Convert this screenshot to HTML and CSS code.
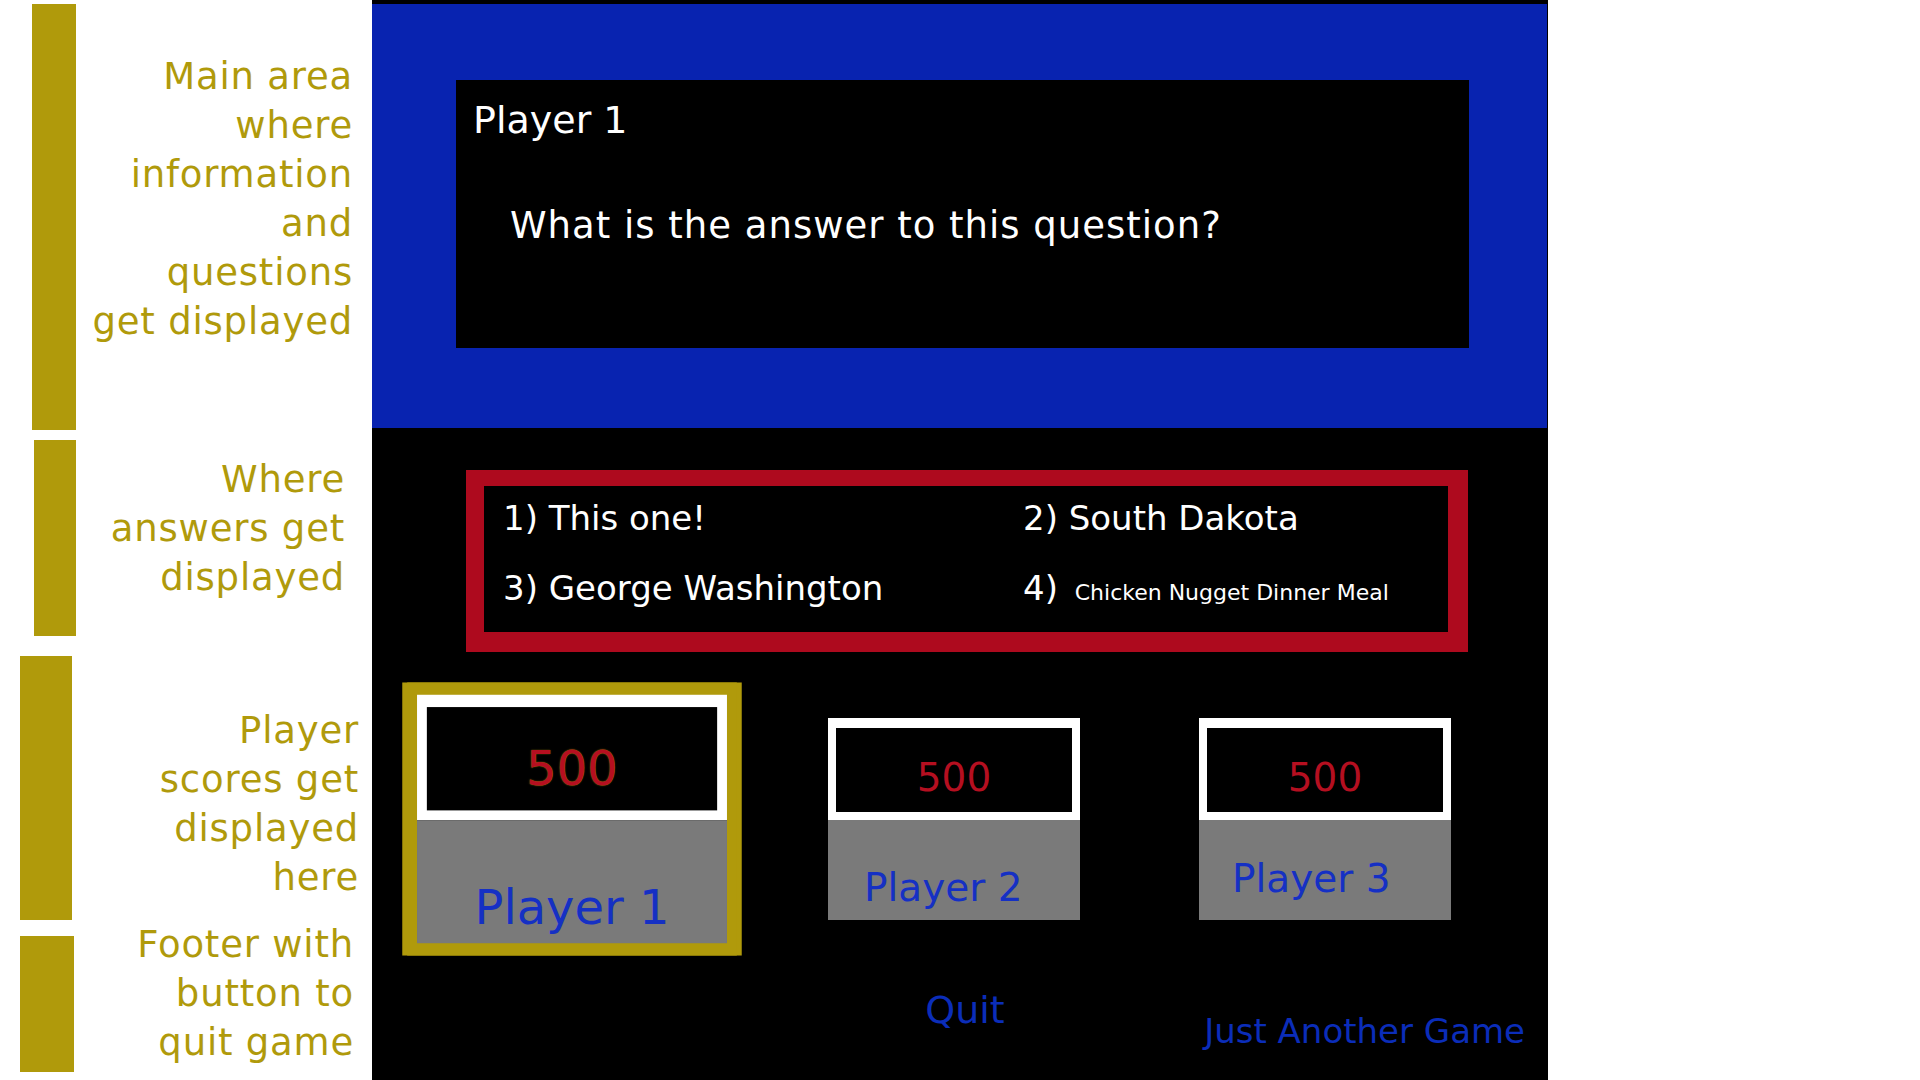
FILE: index.html
```html
<!DOCTYPE html>
<html lang="en">
<head>
<meta charset="utf-8">
<title>Just Another Game</title>
<link rel="stylesheet" href="styles.css">
</head>
<body>
<div class="page">
  <aside class="side">
    <div class="bars">
      <div class="bar bar--main"></div>
      <div class="bar bar--answers"></div>
      <div class="bar bar--scores"></div>
      <div class="bar bar--footer"></div>
    </div>
    <div class="labels">
      <p class="label label--main">Main area<br>where<br>information<br>and<br>questions<br>get displayed</p>
      <p class="label label--answers">Where<br>answers get<br>displayed</p>
      <p class="label label--scores">Player<br>scores get<br>displayed<br>here</p>
      <p class="label label--footer">Footer with<br>button to<br>quit game</p>
    </div>
  </aside>
  <main class="game">
    <section class="board">
      <div class="prompt">
        <div class="prompt-player">Player 1</div>
        <div class="prompt-question">What is the answer to this question?</div>
      </div>
    </section>
    <section class="answers">
      <div class="answers-grid">
        <div class="answer">1) This one!</div>
        <div class="answer">2) South Dakota</div>
        <div class="answer">3) George Washington</div>
        <div class="answer">4) <span class="answer-small">Chicken Nugget Dinner Meal</span></div>
      </div>
    </section>
    <section class="players">
      <div class="card card--active card--p1">
        <div class="card-score"><div class="card-score-value">500</div></div>
        <div class="card-name">Player 1</div>
      </div>
      <div class="card card--p2">
        <div class="card-score"><div class="card-score-value">500</div></div>
        <div class="card-name">Player 2</div>
      </div>
      <div class="card card--p3">
        <div class="card-score"><div class="card-score-value">500</div></div>
        <div class="card-name">Player 3</div>
      </div>
    </section>
    <footer class="footer">
      <span class="footer-spacer"></span>
      <button class="quit" type="button">Quit</button>
      <span class="footer-title">Just Another Game</span>
    </footer>
  </main>
</div>
</body>
</html>
```

FILE: styles.css
```css
html, body {
  margin: 0;
  padding: 0;
  background: #ffffff;
  font-family: "DejaVu Sans", Verdana, sans-serif;
}

.page {
  display: flex;
  height: 1080px;
  overflow: hidden;
}

/* ---------- annotation column ---------- */
.side {
  flex: none;
  width: 372px;
  display: flex;
  background: #ffffff;
}

.bars {
  flex: none;
  width: 80px;
  display: flex;
  flex-direction: column;
}

.bar {
  flex: none;
  background: #b09a0b;
}

.bar--main    { margin-top: 4px;  height: 426px; margin-left: 32px; width: 44px; }
.bar--answers { margin-top: 10px; height: 196px; margin-left: 34px; width: 42px; }
.bar--scores  { margin-top: 20px; height: 264px; margin-left: 20px; width: 52px; }
.bar--footer  { margin-top: 16px; height: 136px; margin-left: 20px; width: 54px; }

.labels {
  flex: 1;
  display: flex;
  flex-direction: column;
}

.label {
  margin: 0;
  color: #b09a0b;
  font-size: 37px;
  line-height: 49px;
  letter-spacing: 0.8px;
  text-align: right;
  white-space: nowrap;
}

.label--main    { margin-top: 52px;  padding-right: 19px; }
.label--answers { margin-top: 109px; padding-right: 27px; }
.label--scores  { margin-top: 104px; padding-right: 13px; }
.label--footer  { margin-top: 18px;  padding-right: 18px; }

/* ---------- game column ---------- */
.game {
  flex: none;
  width: 1176px;
  background: #000000;
  padding-top: 4px;
  display: flex;
  flex-direction: column;
}

.board {
  background: #0823b0;
  margin-right: 1px;
  padding: 76px 78px 80px 84px;
}

.prompt {
  height: 268px;
  box-sizing: border-box;
  background: #000000;
  color: #ffffff;
  padding: 18px 0 0 17px;
}

.prompt-player {
  font-size: 38px;
  line-height: 44px;
}

.prompt-question {
  margin-top: 62px;
  padding-left: 37px;
  font-size: 37px;
  line-height: 44px;
  letter-spacing: 1px;
}

.answers {
  margin: 42px 80px 0 94px;
  border-style: solid;
  border-color: #ae0a1e;
  border-width: 16px 20px 20px 18px;
  background: #000000;
  height: 146px;
}

.answers-grid {
  display: grid;
  grid-template-columns: 520px 1fr;
  row-gap: 30px;
  padding: 12px 0 0 19px;
}

.answer {
  color: #ffffff;
  font-size: 34px;
  line-height: 40px;
  white-space: nowrap;
}

.answer-small {
  font-size: 22px;
  margin-left: 6px;
}

/* ---------- player cards ---------- */
.players {
  margin-top: 66px;
  padding-left: 74px;
  display: grid;
  grid-template-columns: 382px 371px 252px;
  align-items: start;
}

.card {
  width: 252px;
  height: 202px;
  display: flex;
  flex-direction: column;
}

.card-score {
  background: #ffffff;
  padding: 10px 8px 8px;
}

.card-score-value {
  height: 84px;
  box-sizing: border-box;
  padding-top: 16px;
  line-height: 68px;
  background: #000000;
  color: #b50f20;
  font-size: 39px;
  text-align: center;
}

.card-name {
  flex: 1;
  background: #7a7a7a;
  color: #1530c4;
  font-size: 39px;
  line-height: 46px;
  white-space: nowrap;
}

.card--p1 .card-name { text-align: center; padding-top: 48px; }
.card--p2 .card-name { padding-left: 36px; padding-top: 45px; }
.card--p3 .card-name { padding-left: 33px; padding-top: 36px; }

.card--active {
  transform: scale(1.23);
  box-shadow: -2px 0 0 10px #b09a0b, 2px 0 0 10px #b09a0b;
}

.card--active .card-score-value {
  text-shadow: 0 0 1px #b09a0b;
}

/* ---------- footer ---------- */
.footer {
  display: grid;
  grid-template-columns: 1fr auto 1fr;
  align-items: start;
}

.quit {
  margin: 68px 0 0;
  padding: 0 0 0 10px;
  border: none;
  background: none;
  color: #0b2db9;
  font-family: inherit;
  font-size: 38px;
  line-height: 44px;
  cursor: pointer;
}

.footer-title {
  justify-self: end;
  margin-top: 91px;
  padding-right: 23px;
  color: #0b2db9;
  font-size: 34px;
  line-height: 40px;
  white-space: nowrap;
}
```
